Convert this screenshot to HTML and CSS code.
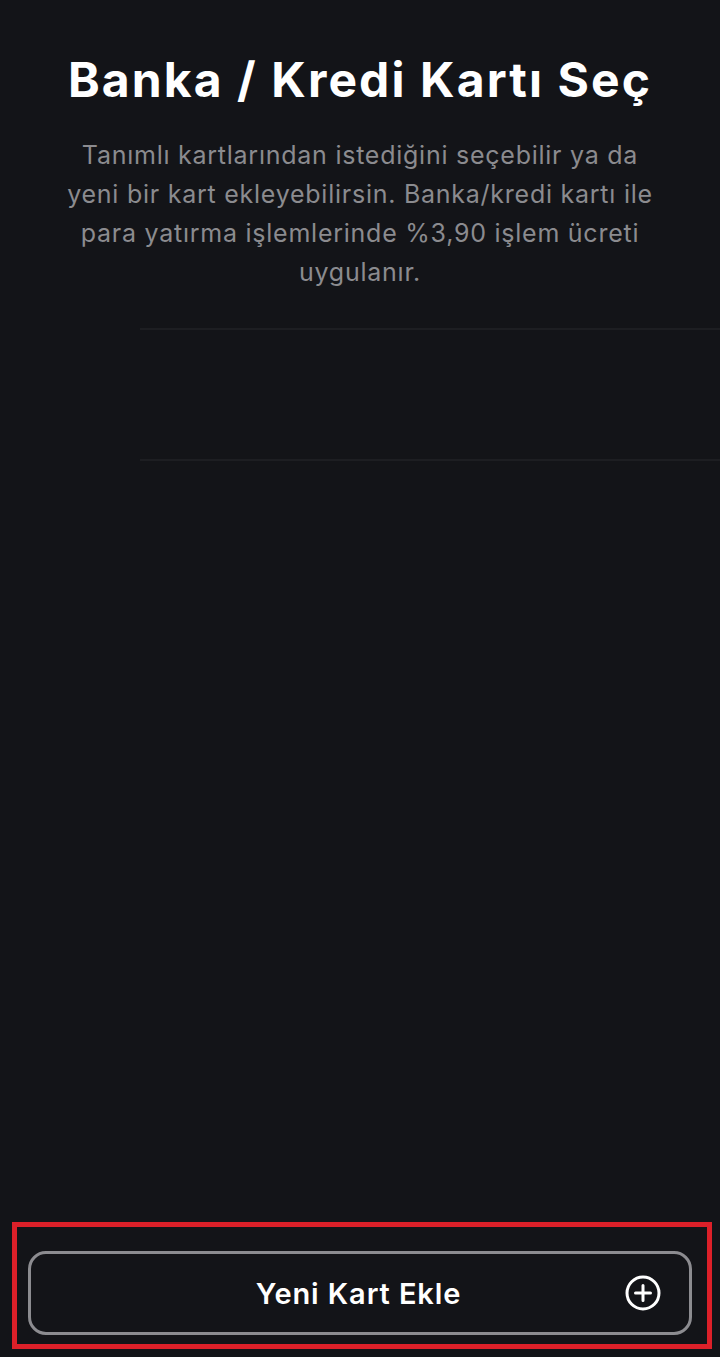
FILE: index.html
```html
<!DOCTYPE html>
<html lang="tr">
<head>
<meta charset="utf-8">
<title>Banka / Kredi Kartı Seç</title>
<link rel="stylesheet" href="styles.css">
</head>
<body>
<div class="screen">
  <header class="head">
    <h1 class="title">Banka / Kredi Kartı Seç</h1>
    <p class="desc">Tanımlı kartlarından istediğini seçebilir ya da<br>yeni bir kart ekleyebilirsin. Banka/kredi kartı ile<br>para yatırma işlemlerinde %3,90 işlem ücreti<br>uygulanır.</p>
  </header>
  <div class="list">
    <div class="row"></div>
  </div>
  <div class="spacer"></div>
  <div class="footer">
    <button class="add-btn" type="button">
      <span class="add-label">Yeni Kart Ekle</span>
      <svg class="add-icon" width="36" height="36" viewBox="0 0 36 36" aria-hidden="true">
        <circle cx="18" cy="18" r="16" fill="none" stroke="#ffffff" stroke-width="3"/>
        <path d="M18 10.5V25.5M10.5 18H25.5" stroke="#ffffff" stroke-width="3" stroke-linecap="round"/>
      </svg>
    </button>
  </div>
</div>
</body>
</html>
```

FILE: styles.css
```css
* { box-sizing: border-box; }
html, body {
  margin: 0;
  padding: 0;
  background: #131418;
}
body {
  font-family: Inter, "Noto Sans", "DejaVu Sans", sans-serif;
  color: #ffffff;
}
.screen {
  width: 720px;
  height: 1357px;
  display: flex;
  flex-direction: column;
}
.head {
  padding-top: 52px;
  display: flex;
  flex-direction: column;
  align-items: center;
}
.title {
  margin: 0;
  font-size: 48px;
  line-height: 56px;
  font-weight: 700;
  letter-spacing: 2.1px;
  color: #ffffff;
  white-space: nowrap;
}
.desc {
  margin: 28px 0 0;
  font-size: 25px;
  line-height: 39px;
  font-weight: 400;
  letter-spacing: 0.75px;
  color: #8b8b8f;
  text-align: center;
  white-space: nowrap;
}
.list {
  margin-top: 36px;
  padding-left: 140px;
}
.row {
  height: 133px;
  border-top: 2px solid #1d1e22;
  border-bottom: 2px solid #1d1e22;
}
.spacer { flex: 1; }
.footer {
  margin: 0 8px 8px 12px;
  border: 5px solid #dc2029;
  padding: 24px 15px 9px 11px;
}
.add-btn {
  width: 100%;
  height: 84px;
  border: 3px solid #8c8c90;
  border-radius: 18px;
  background: #131418;
  display: flex;
  align-items: center;
  justify-content: center;
  padding-right: 9px;
  position: relative;
  font-family: inherit;
  cursor: pointer;
}
.add-label {
  font-size: 29px;
  font-weight: 600;
  letter-spacing: 0.9px;
  color: #ffffff;
}
.add-icon {
  position: absolute;
  right: 28px;
  top: 50%;
  transform: translateY(-50%);
}
```
